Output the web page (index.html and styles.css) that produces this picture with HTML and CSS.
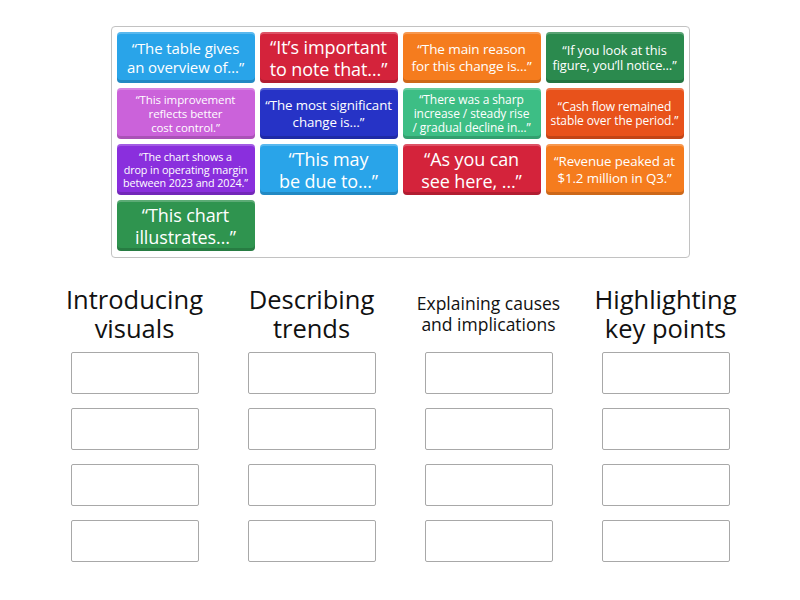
FILE: index.html
```html
<!DOCTYPE html>
<html lang="en">
<head>
<meta charset="utf-8">
<title>Group sort</title>
<link rel="stylesheet" href="styles.css">
</head>
<body>
<div class="page">
  <div class="bank">
    <div class="tile c-blue s15"><span class="txt">“The table gives
an overview of…”</span></div>
    <div class="tile c-red s18"><span class="txt">“It’s important
to note that…”</span></div>
    <div class="tile c-orange s14"><span class="txt">“The main reason
for this change is…”</span></div>
    <div class="tile c-green s13"><span class="txt">“If you look at this
figure, you’ll notice…”</span></div>
    <div class="tile c-magenta s11"><span class="txt">“This improvement
reflects better
cost control.”</span></div>
    <div class="tile c-navy s135"><span class="txt">“The most significant
change is…”</span></div>
    <div class="tile c-teal s12"><span class="txt">“There was a sharp
increase / steady rise
/ gradual decline in…”</span></div>
    <div class="tile c-redorange s12"><span class="txt">“Cash flow remained
stable over the period.”</span></div>
    <div class="tile c-purple s10"><span class="txt">“The chart shows a
drop in operating margin
between 2023 and 2024.”</span></div>
    <div class="tile c-blue s18"><span class="txt">“This may
be due to…”</span></div>
    <div class="tile c-red s18"><span class="txt">“As you can
see here, …”</span></div>
    <div class="tile c-orange s135"><span class="txt">“Revenue peaked at
$1.2 million in Q3.”</span></div>
    <div class="tile c-green2 s18"><span class="txt">“This chart
illustrates…”</span></div>
  </div>

  <div class="groups">
    <div class="group">
      <div class="heading big"><span class="txt">Introducing
visuals</span></div>
      <div class="slot"></div><div class="slot"></div><div class="slot"></div><div class="slot"></div>
    </div>
    <div class="group">
      <div class="heading big"><span class="txt">Describing
trends</span></div>
      <div class="slot"></div><div class="slot"></div><div class="slot"></div><div class="slot"></div>
    </div>
    <div class="group">
      <div class="heading small"><span class="txt">Explaining causes
and implications</span></div>
      <div class="slot"></div><div class="slot"></div><div class="slot"></div><div class="slot"></div>
    </div>
    <div class="group">
      <div class="heading big"><span class="txt">Highlighting
key points</span></div>
      <div class="slot"></div><div class="slot"></div><div class="slot"></div><div class="slot"></div>
    </div>
  </div>
</div>
</body>
</html>
```

FILE: styles.css
```css
html, body {
  margin: 0;
  padding: 0;
  background: #ffffff;
}

body {
  font-family: "Open Sans", "Liberation Sans", sans-serif;
  color: #111111;
  width: 800px;
  height: 600px;
  overflow: hidden;
}

.page {
  padding-top: 26px;
  display: flex;
  flex-direction: column;
  align-items: center;
}

.bank {
  box-sizing: border-box;
  width: 579px;
  height: 232px;
  border: 1px solid #c2c2c2;
  border-radius: 4px;
  padding: 5px;
  display: grid;
  grid-template-columns: repeat(4, 138px);
  grid-auto-rows: 51px;
  column-gap: 5px;
  row-gap: 5px;
  align-content: start;
}

.txt {
  white-space: pre;
}

.tile {
  border-radius: 4px;
  color: #ffffff;
  display: flex;
  align-items: center;
  justify-content: center;
  text-align: center;
  overflow: hidden;
  box-shadow: inset 0 -3px 0 rgba(0, 0, 0, 0.16), inset 0 2px 0 rgba(255, 255, 255, 0.22);
  letter-spacing: -0.1px;
}

.s18 { font-size: 18px; line-height: 22px; }
.s15 { font-size: 15px; line-height: 19px; }
.s14 { font-size: 13.5px; line-height: 17px; }
.s135 { font-size: 13.3px; line-height: 16.5px; }
.s13 { font-size: 12.8px; line-height: 15px; }
.s12 { font-size: 12px; line-height: 14px; }
.s11 { font-size: 11.5px; line-height: 14px; }
.s10 { font-size: 10.8px; line-height: 13px; }

.c-blue { background: #29a4e9; }
.c-red { background: #d4233b; }
.c-orange { background: #f57c1e; }
.c-green { background: #2b8a4e; }
.c-magenta { background: #cb62da; }
.c-navy { background: #2633c6; }
.c-teal { background: #3dbe85; }
.c-redorange { background: #e8521b; }
.c-purple { background: #8a2fdd; }
.c-green2 { background: #2f944f; }

.groups {
  margin-top: 26px;
  display: flex;
}

.group {
  width: 177px;
  display: flex;
  flex-direction: column;
  align-items: center;
}

.heading {
  height: 60px;
  display: flex;
  align-items: center;
  justify-content: center;
  text-align: center;
  color: #111111;
  margin-bottom: 8px;
}

.heading.big {
  font-size: 25.5px;
  line-height: 29px;
}

.heading.small {
  font-size: 17.5px;
  line-height: 21px;
}

.slot {
  box-sizing: border-box;
  width: 128px;
  height: 42px;
  border: 1px solid #a8a8a8;
  border-radius: 2px;
  margin-bottom: 14px;
  background: #ffffff;
}
```
